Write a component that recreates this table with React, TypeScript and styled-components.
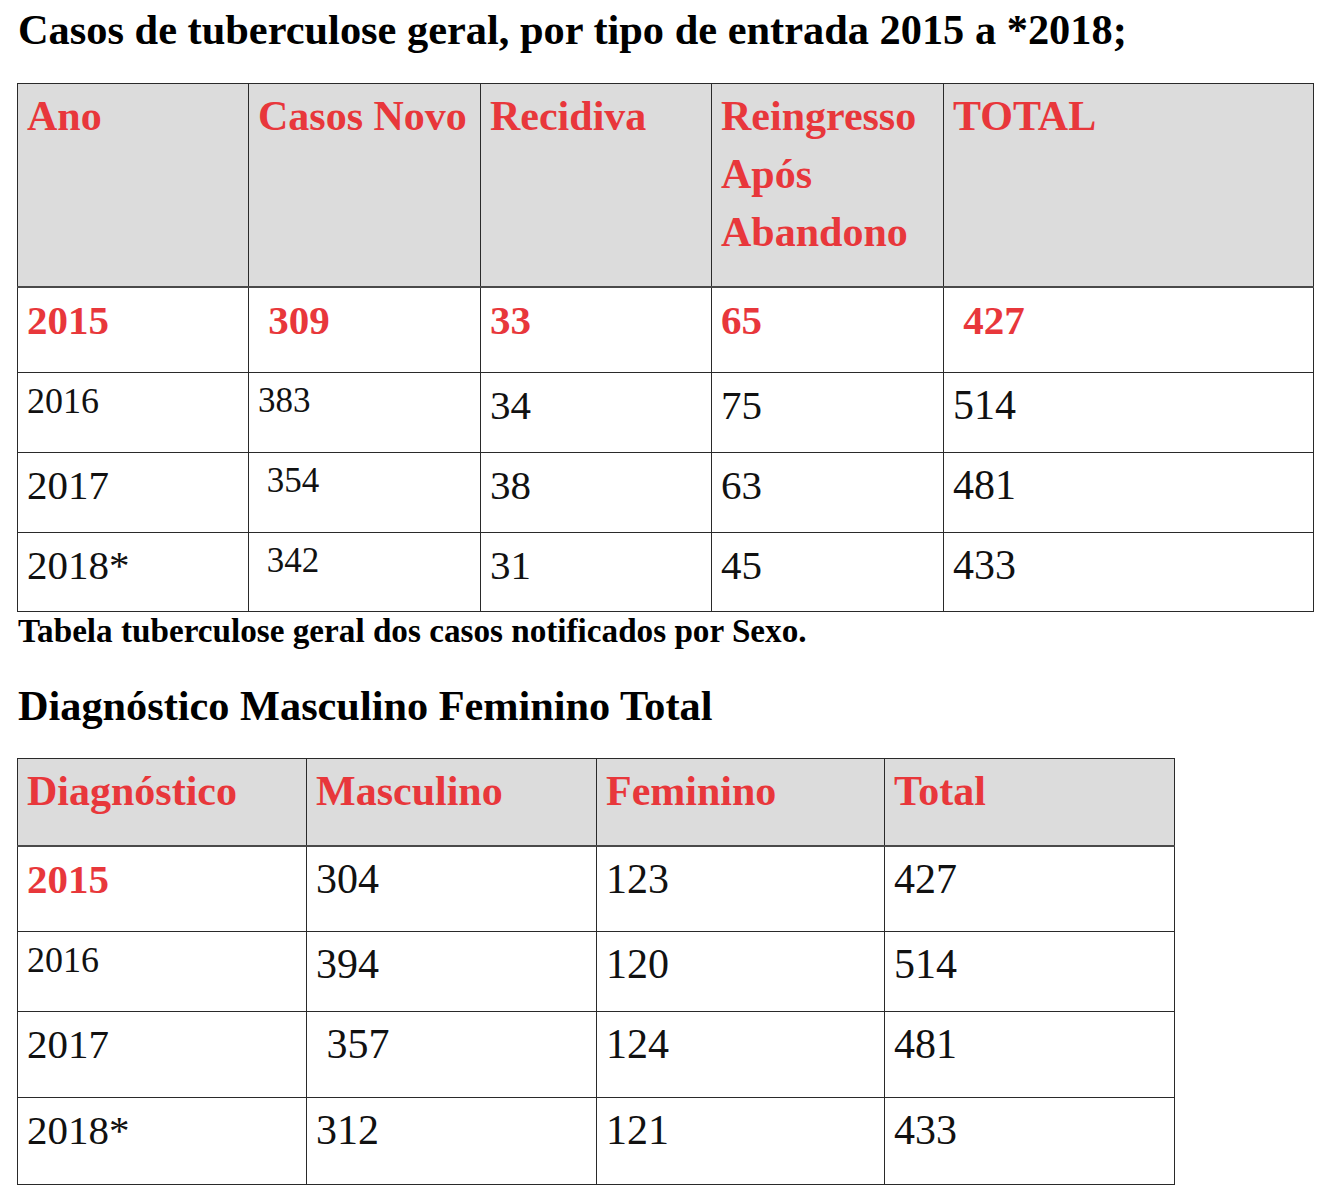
import * as React from 'react';
import styled, { createGlobalStyle } from 'styled-components';

const GlobalStyle = createGlobalStyle`
  body {
    margin: 0;
    background: #fff;
    color: #000;
    font-family: 'Liberation Serif', 'Times New Roman', serif;
  }
`;

const Page = styled.div`
  padding: 6px 17px 16px 17px;
`;

const Heading = styled.h2<{ $gap?: number; $size: number }>`
  margin: ${(p) => p.$gap ?? 0}px 0 0 0;
  padding-left: 1px;
  font-size: ${(p) => p.$size}px;
  line-height: 48px;
  font-weight: 700;
`;

const Caption = styled.p`
  margin: 0;
  padding-left: 1px;
  font-size: 33.2px;
  line-height: 38px;
  font-weight: 700;
`;

const Table = styled.table<{ $width: number; $gap: number }>`
  width: ${(p) => p.$width}px;
  margin-top: ${(p) => p.$gap}px;
  border-collapse: collapse;
  table-layout: fixed;
`;

const Row = styled.tr<{ $height: number }>`
  height: ${(p) => p.$height}px;
`;

const HeadCell = styled.th`
  background: #dcdcdc;
  border: 1px solid #2a2a2a;
  border-bottom: 2px solid #4a4a4a;
  padding: 3px 4px 0 9px;
  vertical-align: top;
  text-align: left;
  color: #e8373b;
  font-size: 42px;
  line-height: 58px;
  font-weight: 700;
`;

type Tone = 'red' | 'plain';

const Cell = styled.td<{ $size: number; $tone: Tone }>`
  border: 1px solid #2a2a2a;
  padding: 4px 4px 0 9px;
  vertical-align: top;
  white-space: nowrap;
  font-size: ${(p) => p.$size}px;
  line-height: 1.38;
  font-weight: ${(p) => (p.$tone === 'red' ? 700 : 400)};
  color: ${(p) => (p.$tone === 'red' ? '#e8373b' : '#111')};
`;

type Item = [string, number, Tone?];

type TableData = {
  width: number;
  cols: number[];
  head: string[];
  headHeight: number;
  rows: { height: number; cells: Item[] }[];
};

const entradas: TableData = {
  width: 1296,
  cols: [231, 232, 231, 232, 370],
  head: ['Ano', 'Casos Novo', 'Recidiva', 'Reingresso Após Abandono', 'TOTAL'],
  headHeight: 203,
  rows: [
    {
      height: 86,
      cells: [
        ['2015', 41, 'red'],
        ['\u00a0309', 41, 'red'],
        ['33', 41, 'red'],
        ['65', 41, 'red'],
        ['\u00a0427', 41, 'red'],
      ],
    },
    {
      height: 80,
      cells: [['2016', 36], ['383', 35], ['34', 41], ['75', 41], ['514', 42]],
    },
    {
      height: 80,
      cells: [['2017', 41], ['\u00a0354', 35], ['38', 41], ['63', 41], ['481', 42]],
    },
    {
      height: 79,
      cells: [['2018*', 41], ['\u00a0342', 35], ['31', 41], ['45', 41], ['433', 42]],
    },
  ],
};

const porSexo: TableData = {
  width: 1157,
  cols: [289, 290, 288, 290],
  head: ['Diagnóstico', 'Masculino', 'Feminino', 'Total'],
  headHeight: 87,
  rows: [
    {
      height: 86,
      cells: [['2015', 41, 'red'], ['304', 42], ['123', 42], ['427', 42]],
    },
    {
      height: 80,
      cells: [['2016', 36], ['394', 42], ['120', 42], ['514', 42]],
    },
    {
      height: 86,
      cells: [['2017', 41], ['\u00a0357', 42], ['124', 42], ['481', 42]],
    },
    {
      height: 87,
      cells: [['2018*', 41], ['312', 42], ['121', 42], ['433', 42]],
    },
  ],
};

const DataTable: React.FC<{ data: TableData; gap: number }> = ({ data, gap }) => (
  <Table $width={data.width} $gap={gap}>
    <colgroup>
      {data.cols.map((w, i) => (
        <col key={i} style={{ width: w }} />
      ))}
    </colgroup>
    <thead>
      <Row $height={data.headHeight}>
        {data.head.map((h) => (
          <HeadCell key={h}>{h}</HeadCell>
        ))}
      </Row>
    </thead>
    <tbody>
      {data.rows.map((row, r) => (
        <Row key={r} $height={row.height}>
          {row.cells.map(([text, size, tone], c) => (
            <Cell key={c} $size={size} $tone={tone ?? 'plain'}>
              {text}
            </Cell>
          ))}
        </Row>
      ))}
    </tbody>
  </Table>
);

const App: React.FC = () => {
  return (
    <Page>
      <GlobalStyle />
      <Heading $size={42.4}>Casos de tuberculose geral, por tipo de entrada 2015 a *2018;</Heading>
      <DataTable data={entradas} gap={29} />
      <Caption>Tabela tuberculose geral dos casos notificados por Sexo.</Caption>
      <Heading $gap={32} $size={42.3}>Diagnóstico Masculino Feminino Total</Heading>
      <DataTable data={porSexo} gap={28} />
    </Page>
  );
};

export default App;
